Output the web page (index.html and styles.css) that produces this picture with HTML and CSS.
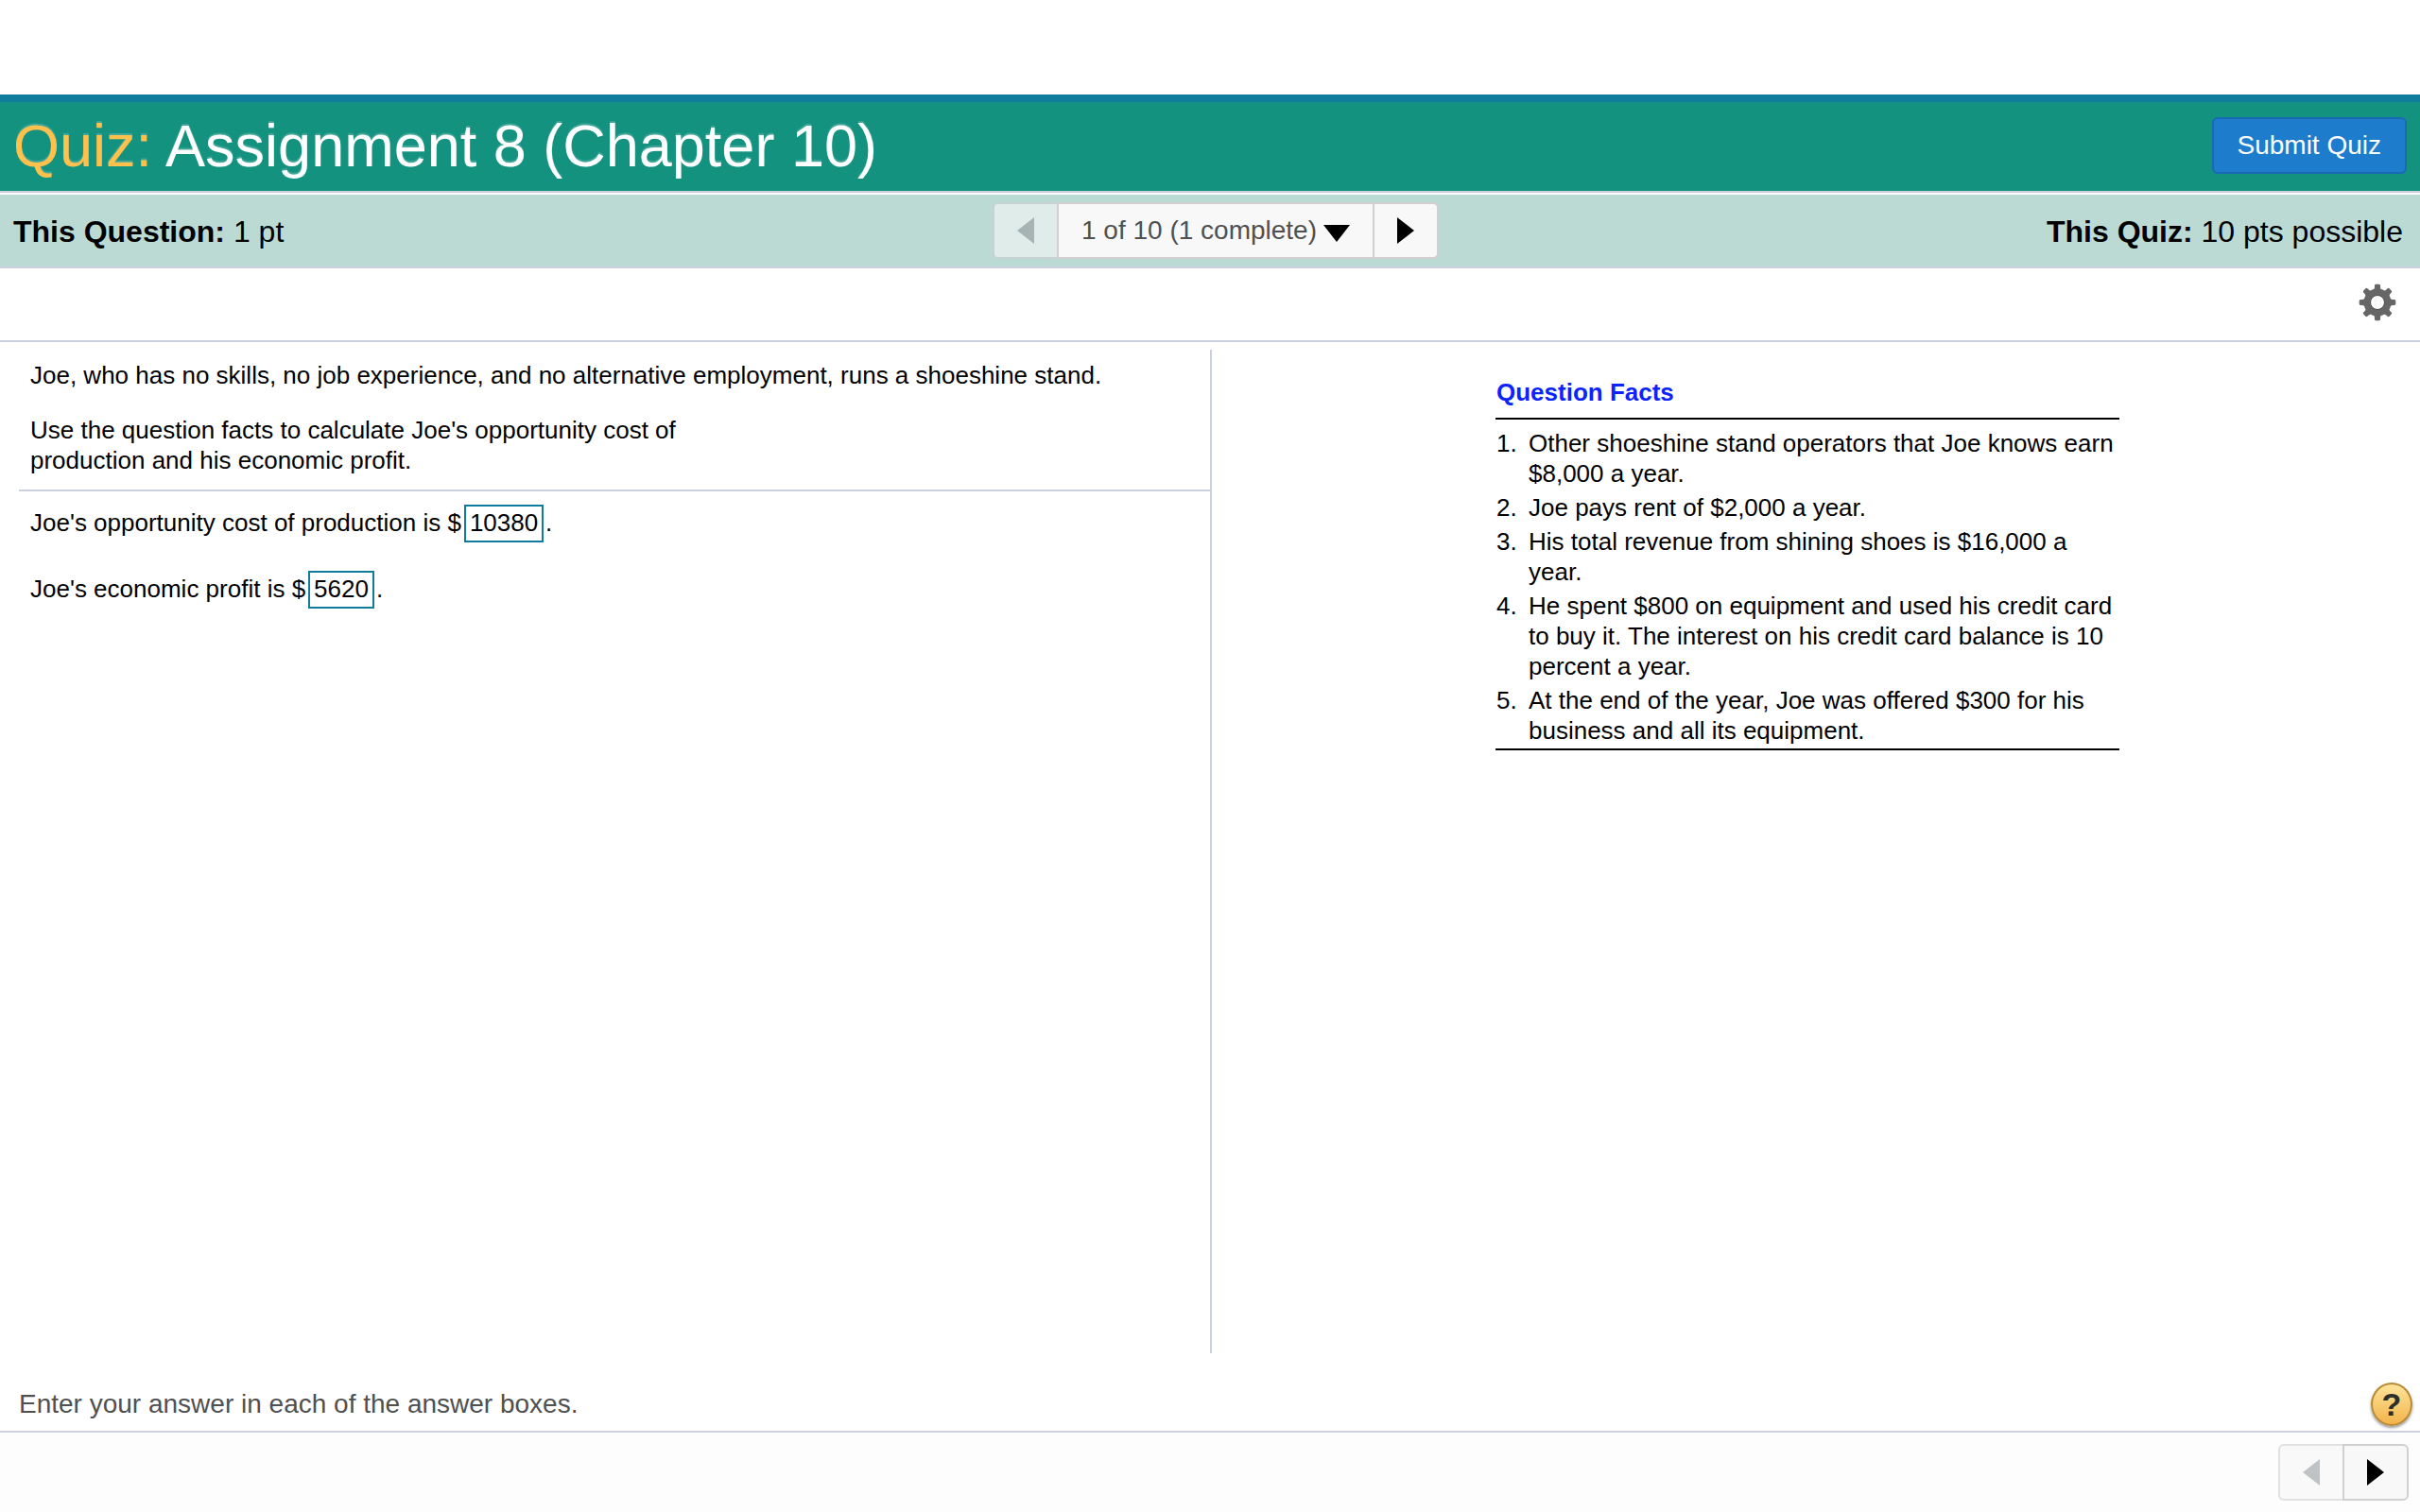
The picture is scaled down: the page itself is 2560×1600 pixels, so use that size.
FILE: index.html
```html
<!DOCTYPE html>
<html lang="en">
<head>
    <meta charset="UTF-8">
    <meta name="viewport" content="width=device-width, initial-scale=1.0">
    <title>Quiz: Assignment 8 (Chapter 10)</title>
    <link rel="stylesheet" href="styles.css">
</head>
<body>
    <header class="title-bar">
        <h1><span class="kind">Quiz:</span> Assignment 8 (Chapter 10)</h1>
        <button type="button" class="submit">Submit Quiz</button>
    </header>

    <div class="status-bar">
        <div class="points"><b>This Question:</b> 1 pt</div>
        <nav class="pager">
            <button type="button" class="step" aria-label="Previous question" disabled>
                <svg width="18" height="28" viewBox="0 0 18 28"><path d="M18 0v28L0 14z"/></svg>
            </button>
            <div class="picker">
                <select aria-label="Go to question">
                    <option>1 of 10 (1 complete)</option>
                </select>
                <svg width="28" height="18" viewBox="0 0 28 18"><path d="M0 0h28L14 18z"/></svg>
            </div>
            <button type="button" class="step" aria-label="Next question">
                <svg width="18" height="28" viewBox="0 0 18 28"><path d="M0 0v28l18-14z"/></svg>
            </button>
        </nav>
        <div class="points total"><b>This Quiz:</b> 10 pts possible</div>
    </div>

    <div class="tools">
        <button type="button" class="gear" aria-label="Settings">
            <svg width="40" height="40" viewBox="-20 -20 40 40">
                <defs>
                    <path id="tooth" d="M-4.5-12.5C-3-14-3-16-3-18Q-2.8-19.3-1.5-19.3H1.5Q2.8-19.3 3-18C3-16 3-14 4.5-12.5z"/>
                </defs>
                <g fill="#666">
                    <use href="#tooth"/>
                    <use href="#tooth" transform="rotate(45)"/>
                    <use href="#tooth" transform="rotate(90)"/>
                    <use href="#tooth" transform="rotate(135)"/>
                    <use href="#tooth" transform="rotate(180)"/>
                    <use href="#tooth" transform="rotate(225)"/>
                    <use href="#tooth" transform="rotate(270)"/>
                    <use href="#tooth" transform="rotate(315)"/>
                </g>
                <circle r="11" fill="none" stroke="#666" stroke-width="7"/>
                <circle r="7.5" fill="none" stroke="#4d4d4d" stroke-width="1"/>
            </svg>
        </button>
    </div>

    <main class="question">
        <section class="problem">
            <div class="prompt">
                <p>Joe, who has no skills, no job experience, and no alternative employment, runs a shoeshine stand.</p>
                <p>Use the question facts to calculate Joe's opportunity cost of<br>production and his economic profit.</p>
            </div>
            <div class="answers">
                <div class="answer">
                    <label for="cost">Joe's opportunity cost of production is $</label>
                    <input type="text" id="cost" class="five" value="10380"><span>.</span>
                </div>
                <div class="answer">
                    <label for="profit">Joe's economic profit is $</label>
                    <input type="text" id="profit" class="four" value="5620"><span>.</span>
                </div>
            </div>
        </section>
        <aside class="side">
            <div class="facts">
                <h2>Question Facts</h2>
                <ol>
                    <li><span>1.</span><span>Other shoeshine stand operators that Joe knows earn $8,000 a year.</span></li>
                    <li><span>2.</span><span>Joe pays rent of $2,000 a year.</span></li>
                    <li><span>3.</span><span>His total revenue from shining shoes is $16,000 a year.</span></li>
                    <li><span>4.</span><span>He spent $800 on equipment and used his credit card to buy it. The interest on his credit card balance is 10 percent a year.</span></li>
                    <li><span>5.</span><span>At the end of the year, Joe was offered $300 for his business and all its equipment.</span></li>
                </ol>
            </div>
        </aside>
    </main>

    <div class="hint">
        <span>Enter your answer in each of the answer boxes.</span>
        <button type="button" class="help" aria-label="Help">?</button>
    </div>

    <footer class="bottom">
        <nav class="pager">
            <button type="button" class="step" aria-label="Previous question" disabled>
                <svg width="18" height="28" viewBox="0 0 18 28"><path d="M18 0v28L0 14z"/></svg>
            </button>
            <button type="button" class="step" aria-label="Next question">
                <svg width="18" height="28" viewBox="0 0 18 28"><path d="M0 0v28l18-14z"/></svg>
            </button>
        </nav>
    </footer>
</body>
</html>
```
FILE: styles.css
```css
* {
    box-sizing: border-box;
}
body {
    margin: 0;
    padding-top: 100px;
    min-height: 100vh;
    display: flex;
    flex-direction: column;
    font-family: "Liberation Sans", Arial, Helvetica, sans-serif;
    font-size: 26px;
    line-height: 32px;
    color: #000;
    background: #fff;
}
h1, h2, p, ol {
    margin: 0;
}
button, select, input {
    font: inherit;
    color: inherit;
    margin: 0;
}
button {
    cursor: pointer;
}
svg {
    display: block;
}

/* header */
.title-bar {
    display: flex;
    justify-content: space-between;
    align-items: center;
    height: 104px;
    padding: 0 14px 2px;
    border-top: 8px solid #107c9d;
    border-bottom: 2px solid #cdd1df;
    background: #149280;
    color: #fff;
}
h1 {
    font-size: 63px;
    line-height: 72px;
    font-weight: normal;
    text-shadow: 0 -2px 1px rgba(255, 255, 255, 0.2);
}
.kind {
    color: #ffc04c;
}
.submit {
    height: 60px;
    padding: 0 25px;
    border: 2px solid #1a69b4;
    border-radius: 6px;
    background: #1d7ccc;
    color: #fff;
    font-size: 28px;
}

/* points and paging */
.status-bar {
    display: grid;
    grid-template-columns: 1fr auto 1fr;
    align-items: center;
    height: 80px;
    padding: 0 18px 0 14px;
    border-top: 2px solid #fff;
    border-bottom: 2px solid #cdd1df;
    background: #bbdad4;
    font-size: 32px;
}
.points {
    padding-top: 2px;
}
.total {
    text-align: right;
}
.pager {
    display: flex;
    height: 60px;
}
.status-bar .pager {
    margin-left: 16px;
}
.step {
    display: flex;
    align-items: center;
    justify-content: center;
    width: 70px;
    padding: 0;
    border: 2px solid #d0d0d0;
    background: #f8f8f8;
}
.step:first-child {
    width: 68px;
    border-right: 0;
    border-radius: 6px 0 0 6px;
}
.step:last-child {
    border-radius: 0 6px 6px 0;
}
.step:disabled {
    opacity: 0.6;
    cursor: default;
}
.step:disabled svg {
    fill: #999ea0;
}
.picker {
    position: relative;
}
.picker select {
    appearance: none;
    height: 60px;
    padding: 0 58px 0 24px;
    border: 2px solid #d0d0d0;
    border-right: 0;
    border-radius: 0;
    background: #f8f8f8;
    color: #505050;
    font-size: 28px;
}
.picker svg {
    position: absolute;
    right: 24px;
    top: 24px;
    pointer-events: none;
}
.tools {
    display: flex;
    justify-content: flex-end;
    height: 78px;
    padding: 16px 25px 0;
    border-bottom: 2px solid #cdd1df;
}
.gear {
    height: 40px;
    padding: 0;
    border: 0;
    background: none;
}

/* question */
.question {
    flex: 1;
    display: grid;
    grid-template-columns: 1fr 1fr;
    padding-top: 8px;
}
.problem {
    padding-left: 20px;
    margin-right: -2px;
    border-right: 2px solid #cdd1df;
}
.prompt {
    display: flex;
    flex-direction: column;
    gap: 26px;
    padding: 11px 12px 15px;
    border-bottom: 2px solid #cdd1df;
}
.answers {
    display: flex;
    flex-direction: column;
    gap: 30px;
    padding: 14px 12px;
}
.answer {
    display: flex;
    align-items: center;
}
.answer label, .answer span {
    padding-bottom: 2px;
}
.answer input {
    height: 40px;
    margin: 0 2px 0 3px;
    padding: 0 4px 2px;
    border: 2px solid #107c9d;
    border-radius: 0;
    background: #fff;
}
.five {
    width: 84px;
}
.four {
    width: 70px;
}
.side {
    padding: 18px 18px 0 2px;
}
.facts {
    width: 660px;
    margin: 0 auto;
    border-bottom: 2px solid #000;
}
h2 {
    padding: 11px 1px;
    border-bottom: 2px solid #000;
    font-size: 26px;
    line-height: 32px;
    color: #0b24fb;
}
ol {
    display: flex;
    flex-direction: column;
    gap: 4px;
    padding: 9px 0 3px 1px;
    list-style: none;
}
li {
    display: flex;
}
li span:first-child {
    flex: 0 0 34px;
}

/* bottom */
.hint {
    display: flex;
    justify-content: space-between;
    align-items: center;
    height: 84px;
    padding: 28px 8px 2px 20px;
    border-bottom: 2px solid #cdd1df;
    color: #505050;
    font-size: 28px;
}
.help {
    width: 44px;
    height: 46px;
    padding: 0;
    border: 2px solid #b98a35;
    border-radius: 50%;
    background: linear-gradient(#fde49a, #f2b44c);
    box-shadow: 0 2px 3px rgba(0, 0, 0, 0.4);
    color: #2d2d2d;
    font-size: 34px;
    font-weight: bold;
}
.bottom {
    display: flex;
    justify-content: flex-end;
    height: 84px;
    padding: 12px 12px 0;
    background: #fdfdfd;
}
```
